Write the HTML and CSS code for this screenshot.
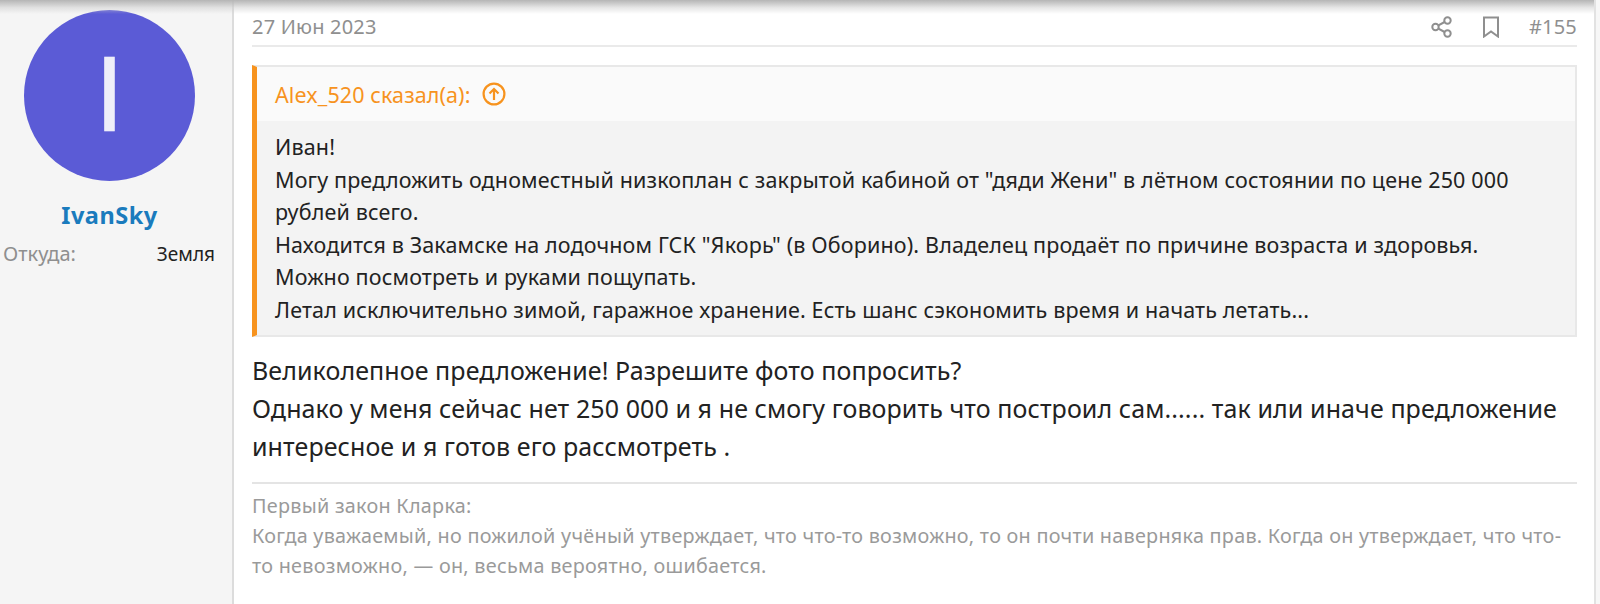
FILE: index.html
```html
<!DOCTYPE html>
<html lang="ru">
  <head>
    <meta charset="UTF-8" />
    <meta name="viewport" content="width=device-width, initial-scale=1.0" />
    <title>IvanSky - сообщение #155</title>
    <link rel="stylesheet" href="styles.css">
  </head>
  <body>
    <div class="top-shadow"></div>
    <article class="post">
      <aside class="user-col">
        <div class="avatar"><span>I</span></div>
        <a href="#" class="user-name">IvanSky</a>
        <div class="user-meta"><span class="meta-label">Откуда:</span><span class="meta-value">Земля</span></div>
      </aside>
      <section class="post-col">
        <header class="post-head">
          <span class="post-date">27 Июн 2023</span>
          <div class="post-actions">
            <svg class="icon-share" width="22" height="22" viewBox="0 0 22 22" fill="none" stroke="currentColor" stroke-width="2">
              <circle cx="16.5" cy="4.5" r="3.2" />
              <circle cx="4.5" cy="11" r="3.2" />
              <circle cx="16.5" cy="17.5" r="3.2" />
              <path d="M7.4 9.4l6.2-3.4M7.4 12.6l6.2 3.4" />
            </svg>
            <svg class="icon-mark" width="18" height="22" viewBox="0 0 18 22" fill="none" stroke="currentColor" stroke-width="2">
              <path d="M2 1.500h14v19l-7-5-7 5z" />
            </svg>
            <span>#155</span>
          </div>
        </header>
        <blockquote class="quote">
          <div class="quote-title">
            Alex_520 сказал(а):
            <svg width="24" height="24" viewBox="0 0 24 24" fill="none" stroke="currentColor" stroke-width="2.200">
              <circle cx="12" cy="12" r="10.400" />
              <path d="M12 18V7M7.500 11.500L12 7l4.500 4.500" />
            </svg>
          </div>
          <div class="quote-body">
            Иван!<br>
            Могу предложить одноместный низкоплан с закрытой кабиной от "дяди Жени" в лётном состоянии по цене 250 000 рублей всего.<br>
            Находится в Закамске на лодочном ГСК "Якорь" (в Оборино). Владелец продаёт по причине возраста и здоровья.<br>
            Можно посмотреть и руками пощупать.<br>
            Летал исключительно зимой, гаражное хранение. Есть шанс сэкономить время и начать летать...
          </div>
        </blockquote>
        <div class="post-text">
          Великолепное предложение! Разрешите фото попросить?<br>
          Однако у меня сейчас нет 250 000 и я не смогу говорить что построил сам...... так или иначе предложение интересное и я готов его рассмотреть .
        </div>
        <div class="signature">
          Первый закон Кларка:<br>
          Когда уважаемый, но пожилой учёный утверждает, что что-то возможно, то он почти наверняка прав. Когда он утверждает, что что-то невозможно, — он, весьма вероятно, ошибается.
        </div>
      </section>
    </article>
  </body>
</html>
```

FILE: styles.css
```css
:root {
  --orange: #f7931e;
  --gray-text: #8f8f8f;
  --dark-text: #222;
}
* { box-sizing: border-box; margin: 0; padding: 0; }
html, body { height: 100%; overflow: hidden; background: #f7f7f7; color: var(--dark-text); font-family: "Noto Sans", "Open Sans", sans-serif; }

.top-shadow { position: absolute; top: 0; left: 0; width: 1594px; height: 14px; background: linear-gradient(to bottom, #b5b5b5, rgba(205, 205, 205, 0.5) 55%, rgba(255, 255, 255, 0)); }

.post { display: flex; height: 604px; }
.user-col { width: 234px; flex: none; background: #f5f5f5; border-right: 2px solid #dcdcdc; padding-top: 10px; }
.avatar { width: 171px; height: 171px; margin-left: 24px; border-radius: 50%; background: #5b5bd6; color: #eeeef9; font-family: Roboto, sans-serif; font-size: 104px; -webkit-text-stroke: 0.6px #eeeef9; display: flex; align-items: center; justify-content: center; }
.user-name { display: block; margin-top: 18px; text-align: center; font-size: 23.500px; font-weight: 700; color: #1a7bbd; text-decoration: none; letter-spacing: 0.5px; padding-right: 13px; }
.user-meta { display: flex; justify-content: space-between; align-items: baseline; padding: 0 17px 0 3px; margin-top: 9px; font-size: 20px; }
.meta-label { color: var(--gray-text); }
.meta-value { font-size: 19px; }

.post-col { width: 1362px; padding: 0 17px 0 18px; flex: none; background: #fff; border-right: 2px solid #e2e2e2; }
.post-head { height: 47px; display: flex; justify-content: space-between; align-items: center; padding-top: 8px; border-bottom: 2px solid #eaeaea; color: var(--gray-text); font-size: 20px; letter-spacing: 0.2px; }
.post-actions { display: flex; align-items: center; gap: 29px; }
.quote { margin-top: 18px; height: 272px; border: 2px solid #e8e8e8; border-left: 5px solid var(--orange); background: #f3f3f3; }
.quote-title { height: 54px; display: flex; align-items: center; gap: 11px; padding-left: 18px; background: #fafafa; color: var(--orange); font-size: 21.500px; letter-spacing: 0.1px; }
.quote-body { padding: 10px 18px 0; font-size: 21.500px; line-height: 32.600px; letter-spacing: 0.15px; }
.post-text { margin-top: 14px; font-size: 25px; line-height: 38px; letter-spacing: 0.09px; padding-bottom: 17px; border-bottom: 2px solid #e4e4e4; }
.signature { margin-top: 7px; font-size: 19.800px; line-height: 30px; letter-spacing: 0.27px; color: #9a9a9a; }
```
